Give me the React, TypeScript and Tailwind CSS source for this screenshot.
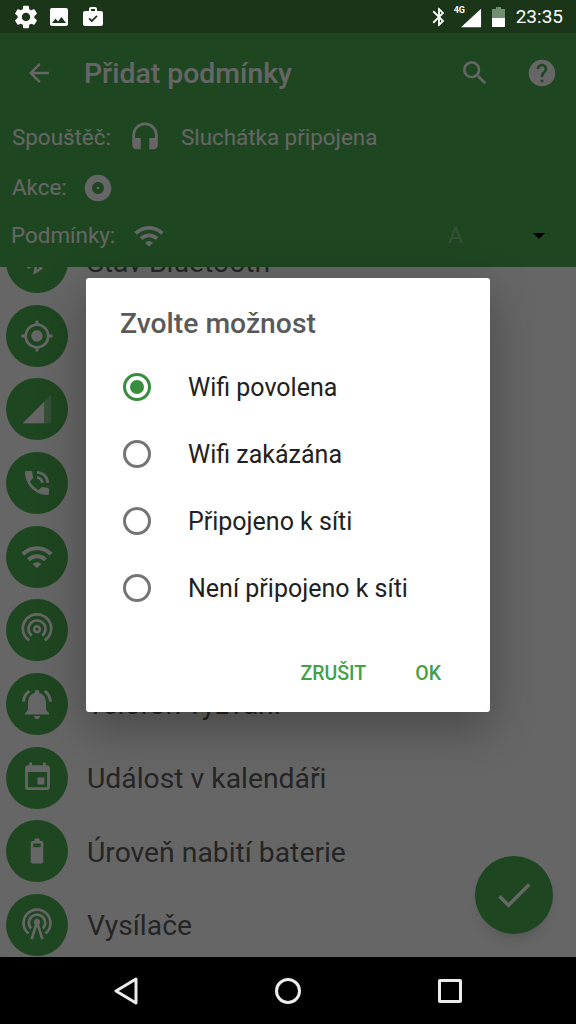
import React from 'react';
import {
  MdAlbum,
  MdArrowBack,
  MdBluetooth,
  MdCheck,
  MdEvent,
  MdGpsFixed,
  MdHeadset,
  MdHelp,
  MdImage,
  MdNotificationsActive,
  MdPhoneInTalk,
  MdSearch,
  MdSettings,
  MdWifi,
} from 'react-icons/md';

const BatteryIcon: React.FC = () => (
  <svg width="30" height="30" viewBox="0 0 24 24" fill="currentColor">
    <path d="M15.67 4H14V2h-4v2H8.33C7.6 4 7 4.6 7 5.33v15.33C7 21.4 7.6 22 8.33 22h7.33c.74 0 1.34-.6 1.34-1.33V5.33C17 4.6 16.4 4 15.67 4z" />
    <path d="M9 6h6v3H9z" fill="#4caf50" />
  </svg>
);

const SignalIcon: React.FC = () => (
  <svg width="34" height="34" viewBox="0 0 24 24" fill="currentColor">
    <path d="M2 22 22 2v20z" fillOpacity="0.3" />
    <path d="M2 22 17 7v15z" />
  </svg>
);

const ArcsIcon: React.FC = () => (
  <svg width="34" height="34" viewBox="0 0 24 24" fill="none" stroke="currentColor" strokeWidth="1.9">
    <path d="M6.5 19.300a10 10 0 1 1 11 0" />
    <path d="M8.300 16a6 6 0 1 1 7.400 0" />
    <circle cx="12" cy="11.500" r="2" />
  </svg>
);

const AntennaIcon: React.FC = () => (
  <svg width="34" height="34" viewBox="0 0 24 24" fill="none" stroke="currentColor" strokeWidth="1.9">
    <path d="M6 18a9.500 9.500 0 1 1 12 0" />
    <path d="M7.800 14.500a5.800 5.800 0 1 1 8.400 0" />
    <path d="M8.200 22 12 10l3.800 12" />
    <circle cx="12" cy="10" r="1.200" fill="currentColor" />
  </svg>
);

const rows: { icon: React.ReactNode; label: string }[] = [
  { icon: <MdBluetooth size={30} className="rotate-12" />, label: 'Stav Bluetooth' },
  { icon: <MdGpsFixed size={34} />, label: '' },
  { icon: <SignalIcon />, label: '' },
  { icon: <MdPhoneInTalk size={32} />, label: '' },
  { icon: <MdWifi size={34} />, label: '' },
  { icon: <ArcsIcon />, label: '' },
  { icon: <MdNotificationsActive size={36} />, label: 'Telefon vyzvání' },
  { icon: <MdEvent size={33} />, label: 'Událost v kalendáři' },
  { icon: <BatteryIcon />, label: 'Úroveň nabití baterie' },
  { icon: <AntennaIcon />, label: 'Vysílače' },
];

const options = ['Wifi povolena', 'Wifi zakázána', 'Připojeno k síti', 'Není připojeno k síti'];

const App: React.FC = () => {
  return (
    <div className="relative flex h-[1024px] w-[576px] flex-col overflow-hidden bg-black font-['Roboto',sans-serif]">
      {/* status bar stays above the scrim */}
      <div className="flex h-[33px] shrink-0 items-center justify-between bg-[#1a3518] pl-[12px] pr-[13px] text-white">
        <div className="flex items-center">
          <MdSettings size={28} />
          <MdImage size={24} className="ml-[7px]" />
          <svg className="ml-[10px]" width="24" height="24" viewBox="0 0 24 24" fill="currentColor">
            <path
              fillRule="evenodd"
              d="M20 6h-4V4c0-1.1-.9-2-2-2h-4C8.900 2 8 2.900 8 4v2H4c-1.100 0-2 .9-2 2v11c0 1.100.9 2 2 2h16c1.100 0 2-.9 2-2V8c0-1.100-.9-2-2-2zM10 4h4v2h-4V4zm.8 13.200-3.300-3.300 1.200-1.200 2.100 2.100 4.600-4.600 1.200 1.200-5.800 5.800z"
            />
          </svg>
        </div>
        <div className="flex items-center">
          <MdBluetooth size={22} />
          <div className="relative ml-[4px] h-[24px] w-[28px]">
            <svg className="absolute bottom-[1px] right-0" width="21" height="20" viewBox="0 0 23 20" fill="currentColor">
              <path d="M0 20 22 0v20z" />
            </svg>
            <span className="absolute left-0 top-[1px] text-[9px] font-bold leading-none">4G</span>
          </div>
          <svg className="ml-[10px]" width="13" height="20" viewBox="0 0 13 20">
            <path d="M0 2h4V0h5v2h4v18H0z" fill="#6f8f70" />
            <path d="M0 11h13v9H0z" fill="#fff" />
          </svg>
          <span className="ml-[11px] text-[19px] leading-none">23:35</span>
        </div>
      </div>

      <div className="relative min-h-0 flex-1 overflow-hidden bg-white">
        <div className="relative z-10 flex h-[234px] flex-col bg-[#4caf50] text-white">
          <div className="flex h-[80px] shrink-0 items-center">
            <MdArrowBack size={30} className="ml-[24px]" />
            <span className="ml-[30px] mt-[2px] flex-1 text-[28.400px] font-medium leading-none">Přidat podmínky</span>
            <MdSearch size={32} className="mr-[35px]" />
            <MdHelp size={32} className="mr-[18px]" />
          </div>
          <div className="flex h-[50px] items-center pl-[12px] text-[22.400px]">
            <span>Spouštěč:</span>
            <MdHeadset size={34} className="ml-[17px]" />
            <span className="ml-[19px]">Sluchátka připojena</span>
          </div>
          <div className="flex h-[50px] items-center pl-[12px] text-[22.400px]">
            <span>Akce:</span>
            <MdAlbum size={32} className="ml-[15px]" />
          </div>
          <div className="flex h-[46px] items-center pl-[11px] text-[22.400px]">
            <span>Podmínky:</span>
            <MdWifi size={32} className="ml-[18px]" />
            <span className="ml-[283px] w-[85px] text-[#8bc98e]">A</span>
            <span className="h-0 w-0 border-x-[6px] border-t-[6px] border-x-transparent border-t-black" />
          </div>
        </div>

        <div className="-mt-[42px] flex flex-col pl-[6px]">
          {rows.map((row, i) => (
            <div key={i} className="flex h-[73.700px] shrink-0 items-center">
              <div className="flex h-[62px] w-[62px] shrink-0 items-center justify-center rounded-full bg-[#4caf50] text-white">
                {row.icon}
              </div>
              <span className="ml-[19px] mt-[3px] text-[28.300px] text-[#5e5e5e]">{row.label}</span>
            </div>
          ))}
        </div>

        <button className="absolute left-[475px] top-[823px] flex h-[78px] w-[78px] items-center justify-center rounded-full bg-[#4caf50] text-white shadow-lg">
          <MdCheck size={44} />
        </button>

        <div className="absolute inset-0 z-20 flex items-center justify-center bg-black/60">
          <div className="flex h-[434px] w-[404px] flex-col rounded-[3px] bg-white shadow-[0_16px_48px_rgba(0,0,0,0.3)]">
            <div className="pl-[34px] pt-[28px] text-[28.300px] font-medium leading-[36px] text-[#5a5a5a]">Zvolte možnost</div>
            <div className="mt-[11px] flex flex-col">
              {options.map((opt, i) => (
                <div key={opt} className="flex h-[67.200px] items-center pl-[37px]">
                  {i === 0 ? (
                    <span className="flex h-[28px] w-[28px] items-center justify-center rounded-full border-[3px] border-[#388e3c]">
                      <span className="h-[14px] w-[14px] rounded-full bg-[#388e3c]" />
                    </span>
                  ) : (
                    <span className="h-[28px] w-[28px] rounded-full border-[3px] border-[#757575]" />
                  )}
                  <span className="ml-[37px] mt-[2px] text-[25px] text-[#212121]">{opt}</span>
                </div>
              ))}
            </div>
            <div className="mt-auto flex h-[80px] items-center justify-end pr-[49px] pt-[3px] text-[19.500px] font-medium text-[#43a047]">
              <span>ZRUŠIT</span>
              <span className="ml-[49px]">OK</span>
            </div>
          </div>
        </div>
      </div>

      <div className="flex h-[67px] shrink-0 items-center bg-black text-[#ececec]">
        <svg className="ml-[114px]" width="24" height="28" viewBox="0 0 24 28" fill="none" stroke="currentColor" strokeWidth="3" strokeLinejoin="round">
          <path d="M22 2 2 14l20 12z" />
        </svg>
        <span className="ml-[137px] h-[26px] w-[26px] rounded-full border-[3px] border-current" />
        <span className="ml-[137px] h-[24px] w-[24px] rounded-[2px] border-[3px] border-current" />
      </div>
    </div>
  );
};

export default App;
